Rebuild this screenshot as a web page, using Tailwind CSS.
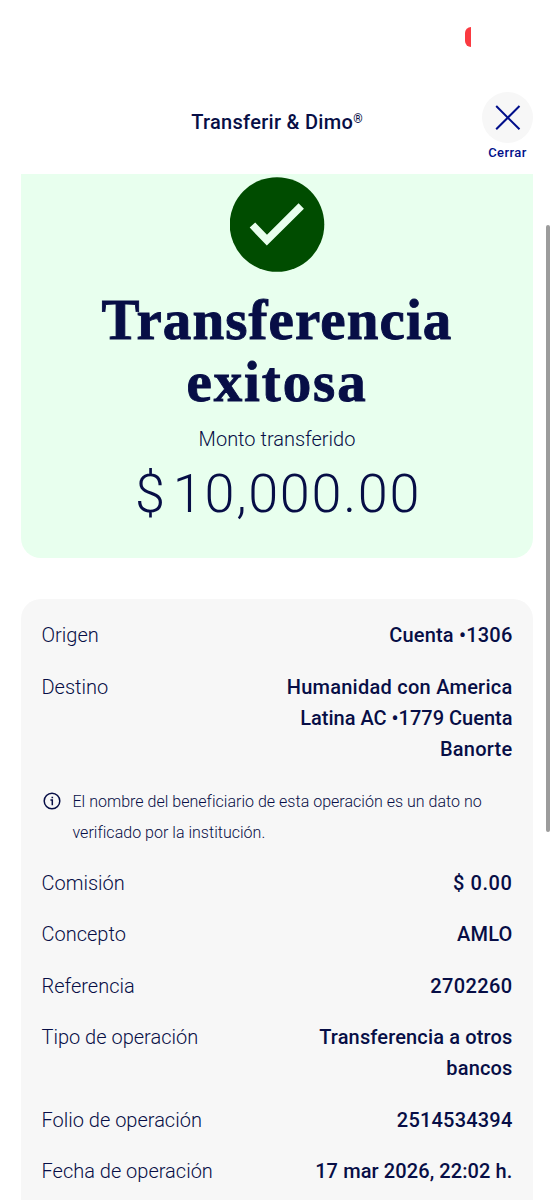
<!DOCTYPE html>
<html lang="es">
<head>
    <meta charset="UTF-8">
    <meta name="viewport" content="width=device-width, initial-scale=1.0">
    <title>Transferir &amp; Dimo</title>
    <script src="https://cdn.jsdelivr.net/npm/@tailwindcss/browser@4"></script>
</head>
<body class="relative bg-white h-[1200px] overflow-hidden text-[#070e46] font-['Roboto','Noto_Sans',sans-serif]">
    <!-- Status indicator -->
    <div class="absolute left-[465px] top-[27px] w-1.5 h-5 rounded-l-full bg-[#fa3a41]"></div>

    <!-- Header -->
    <header class="grid grid-cols-[1fr_auto_1fr] h-[174px] px-[21px] pt-[92px]">
        <h1 class="col-start-2 pt-[15px] text-xl leading-[30px] font-medium tracking-[0.3px] whitespace-nowrap">Transferir &amp; Dimo<sup class="text-xs">®</sup></h1>
        <button class="justify-self-end flex flex-col items-center w-[51px] text-[#000e8a]">
            <span class="flex items-center justify-center size-[51px] rounded-full bg-[#f7f7f7]">
                <svg class="size-[26px]" viewBox="0 0 26 26" fill="none" stroke="currentColor" stroke-width="2">
                    <path d="M1.2 1 24.5 24.3M24.5 1 1.2 24.3"/>
                </svg>
            </span>
            <span class="text-[13px] leading-5 font-medium tracking-[0.45px]">Cerrar</span>
        </button>
    </header>

    <!-- Result -->
    <section class="flex flex-col items-center mx-[21px] h-[383.5px] pt-[3px] rounded-b-[20px] bg-[#e8ffee] text-center">
        <svg class="size-[95px]" viewBox="0 0 94 94">
            <circle cx="46.5" cy="47" r="46.8" fill="#004c00"/>
            <path d="M22.2 47.5 36.5 62.5 70.5 28.7" fill="none" stroke="#e8ffee" stroke-width="7.5"/>
        </svg>
        <h2 class="mt-[17px] w-[400px] text-[57px] leading-[62px] font-bold tracking-[1.1px] font-['Liberation_Serif',serif] [-webkit-text-stroke:0.9px_#070e46]">Transferencia <span class="tracking-[1.9px]">exitosa</span></h2>
        <p class="mt-[11px] text-xl leading-[31px] font-light">Monto transferido</p>
        <p class="mt-1 flex gap-2 pl-0.5 text-[54px] leading-[70px] font-light"><span>$</span><span class="tracking-[1.7px]">10,000.00</span></p>
    </section>

    <!-- Details -->
    <section class="flex flex-col gap-[20.5px] mt-[41.5px] mx-[21px] pl-[20.5px] pr-[20.5px] py-[21px] rounded-t-[20px] bg-[#f7f7f7] text-xl leading-[31px]">
        <div class="flex justify-between">
            <span class="font-light">Origen</span>
            <span class="font-medium tracking-[0.2px]">Cuenta •1306</span>
        </div>
        <div class="flex justify-between">
            <span class="font-light">Destino</span>
            <span class="font-medium text-right tracking-[0.25px]">Humanidad con America<br><span class="tracking-normal">Latina AC •1779 Cuenta</span><br>Banorte</span>
        </div>
        <div class="flex gap-3">
            <svg class="mt-[7px] ml-px size-[18px] shrink-0" viewBox="0 0 18 18" fill="none" stroke="currentColor" stroke-width="1.5">
                <circle cx="9" cy="9" r="7.8"/>
                <path d="M7.4 8h1.9v5.2M8.5 5.5h1.6"/>
            </svg>
            <p class="pt-px -mb-px text-base leading-[31px] font-light tracking-[0.02px] whitespace-nowrap">El nombre del beneficiario de esta operación es un dato no<br>verificado por la institución.</p>
        </div>
        <div class="flex justify-between">
            <span class="font-light">Comisión</span>
            <span class="font-medium tracking-[0.6px]">$ 0.00</span>
        </div>
        <div class="flex justify-between">
            <span class="font-light">Concepto</span>
            <span class="font-medium tracking-[0.2px]">AMLO</span>
        </div>
        <div class="flex justify-between">
            <span class="font-light">Referencia</span>
            <span class="font-medium tracking-[0.4px]">2702260</span>
        </div>
        <div class="flex justify-between">
            <span class="font-light">Tipo de operación</span>
            <span class="font-medium text-right tracking-[0.15px]">Transferencia a otros<br>bancos</span>
        </div>
        <div class="flex justify-between">
            <span class="font-light">Folio de operación</span>
            <span class="font-medium tracking-[0.2px]">2514534394</span>
        </div>
        <div class="flex justify-between">
            <span class="font-light">Fecha de operación</span>
            <span class="font-medium tracking-[0.1px]">17 mar 2026, 22:02 h.</span>
        </div>
    </section>

    <!-- Scrollbar -->
    <div class="absolute left-[546px] top-[225px] w-1 h-[607px] rounded-full bg-[#9c9c9c]"></div>
</body>
</html>
